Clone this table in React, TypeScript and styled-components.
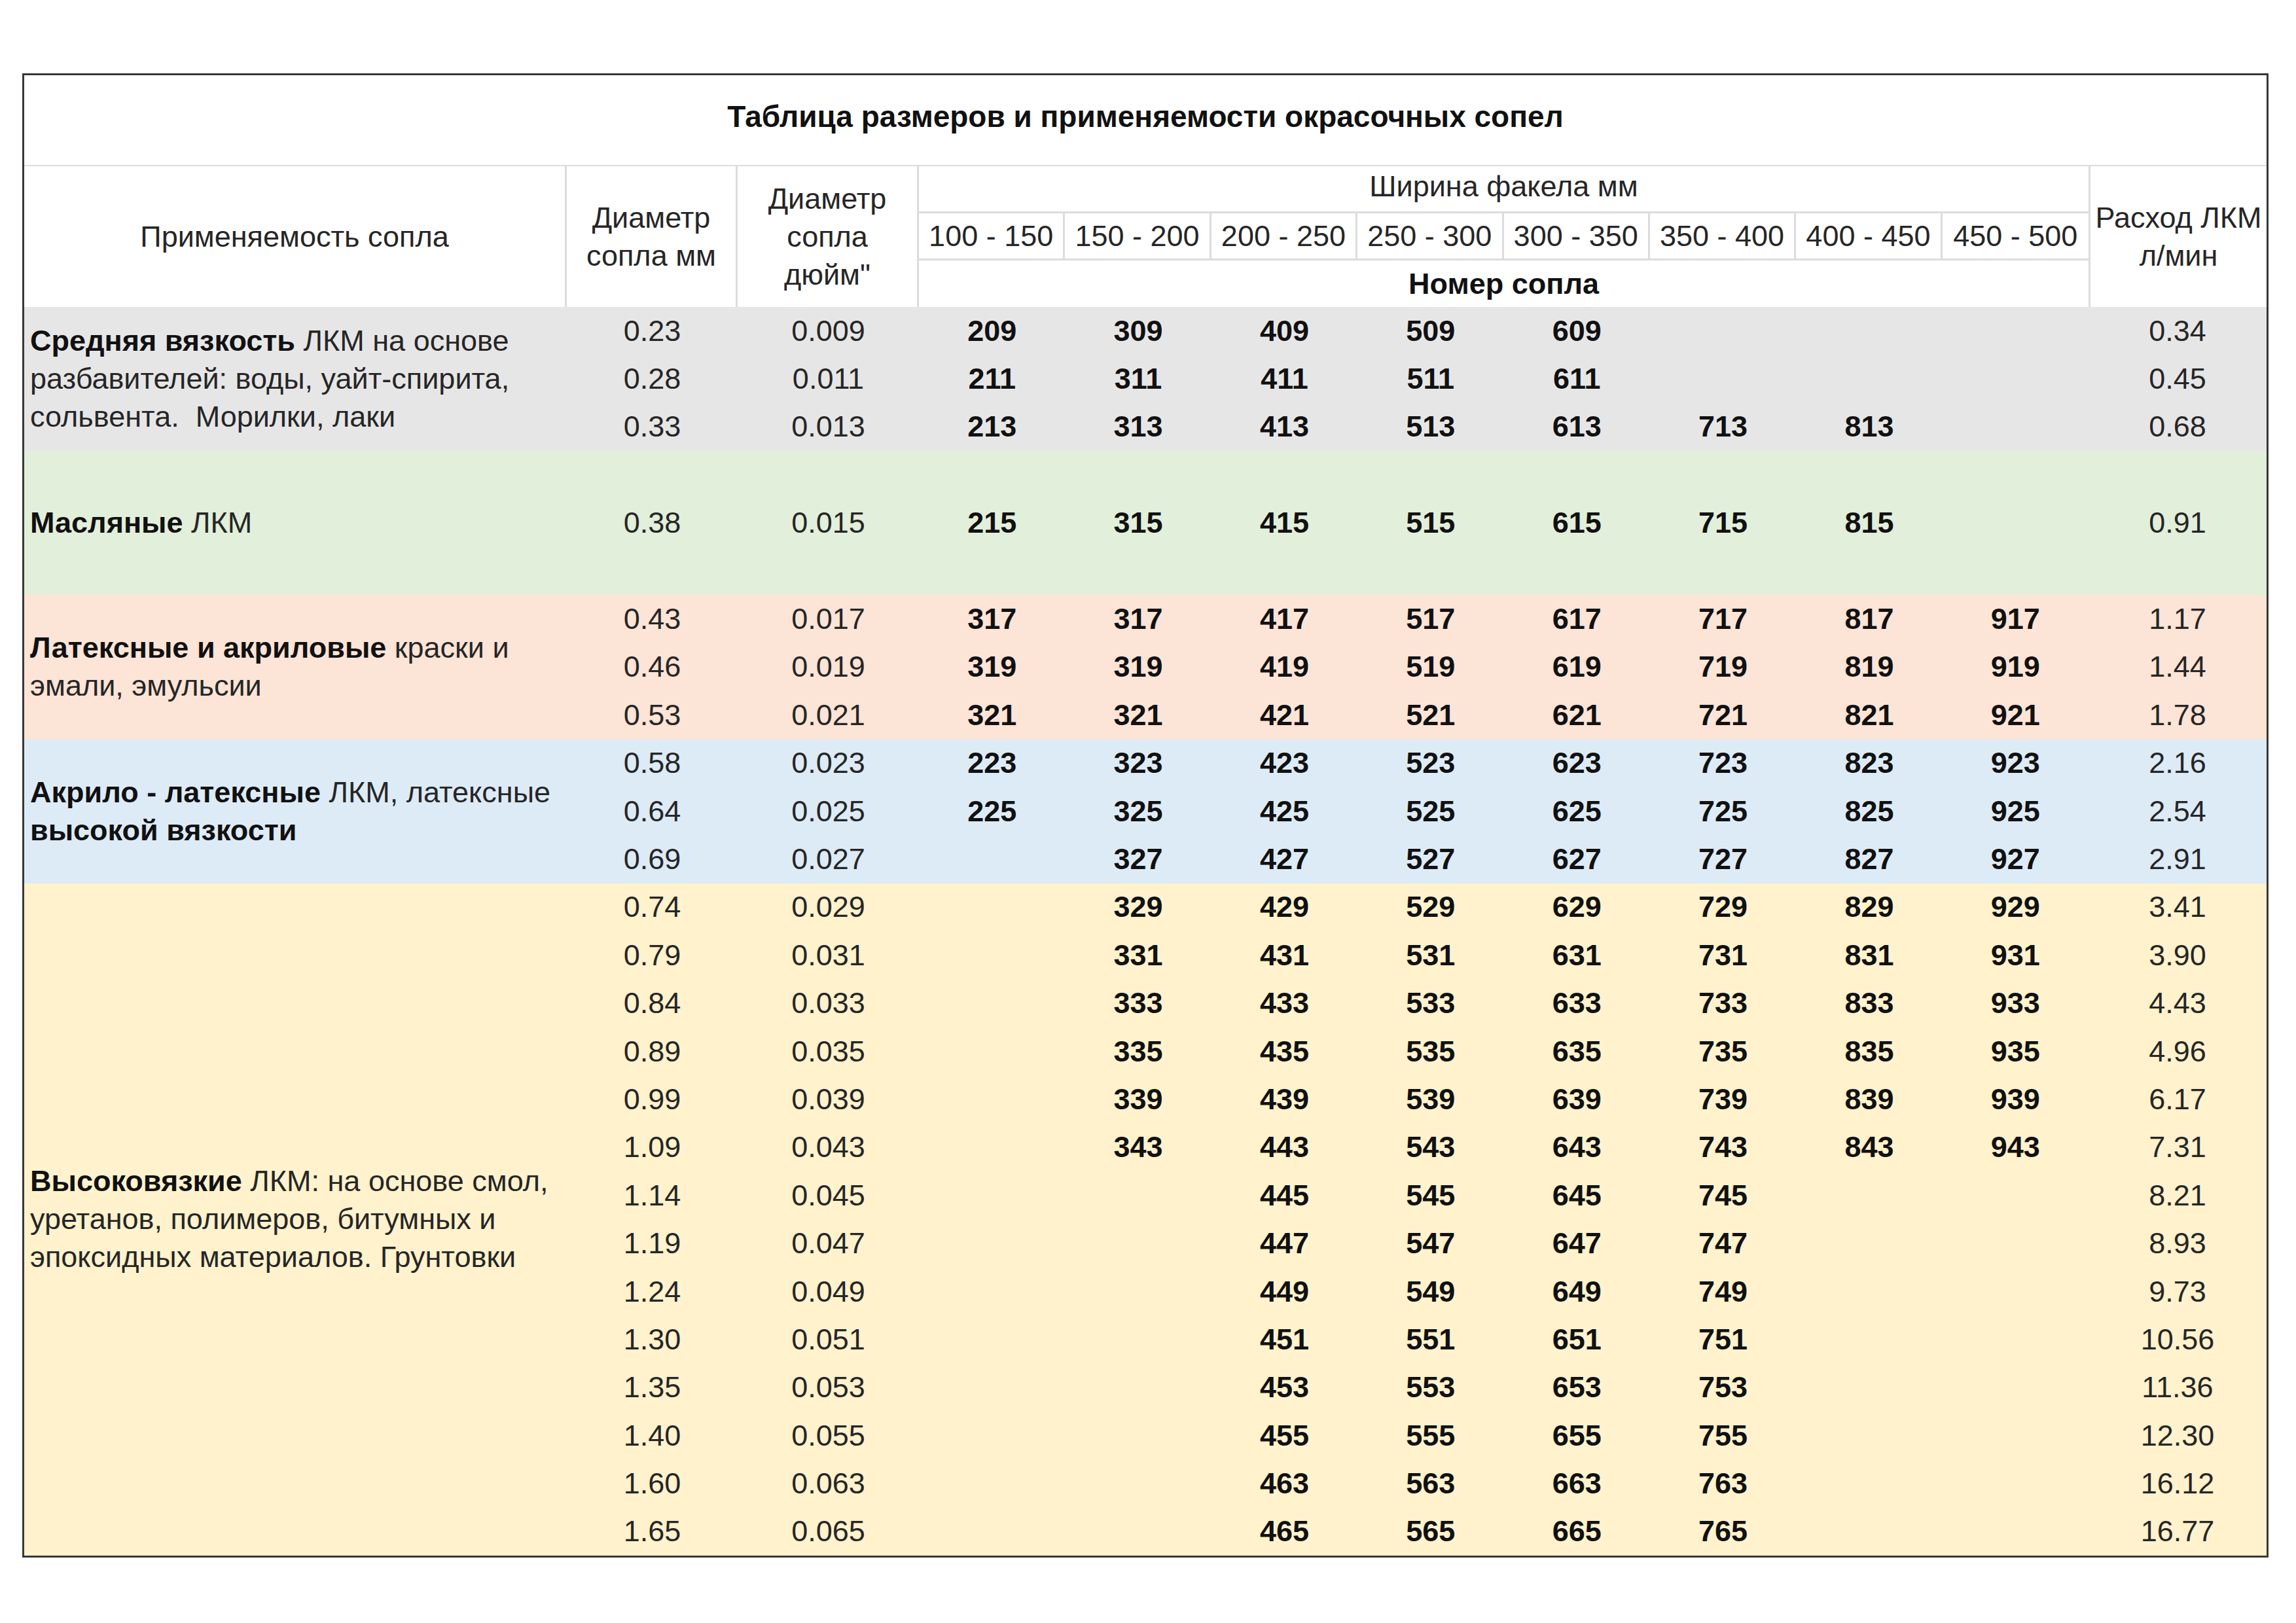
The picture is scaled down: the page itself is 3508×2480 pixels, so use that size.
import React from "react";
import styled, { createGlobalStyle } from "styled-components";

const COLS = "829px 261px 277px repeat(8, 223.375px) 272px";
const UNIT = 73.4;
const LINE = "#dcdcdc";

const GlobalStyle = createGlobalStyle`
  html, body { margin: 0; padding: 0; background: #ffffff; }
  body { font-family: "Liberation Sans", Arial, sans-serif; color: #222222; }
`;

const Page = styled.div`
  width: 3508px;
  height: 2480px;
  box-sizing: border-box;
  padding: 112px 0 0 34px;
  background: #ffffff;
`;

const Table = styled.div`
  width: 3432px;
  box-sizing: border-box;
  border: 3px solid #383838;
  display: flex;
  flex-direction: column;
`;

const Title = styled.div`
  height: 139px;
  box-sizing: border-box;
  border-bottom: 2px solid ${LINE};
  padding-bottom: 12px;
  display: flex;
  align-items: center;
  justify-content: center;
  font-size: 46px;
  font-weight: 700;
  color: #111111;
`;

const HeaderGrid = styled.div`
  display: grid;
  grid-template-columns: ${COLS};
  grid-template-rows: 72px 72px 71px;
  background: #ffffff;
`;

const HeadCell = styled.div<{
  $col: string;
  $row: string;
  $bold?: boolean;
  $right?: boolean;
  $left?: boolean;
  $bottom?: boolean;
  $pad?: number;
}>`
  grid-column: ${(p) => p.$col};
  grid-row: ${(p) => p.$row};
  box-sizing: border-box;
  display: flex;
  flex-direction: column;
  align-items: center;
  justify-content: center;
  text-align: center;
  font-size: 45px;
  line-height: 58px;
  white-space: nowrap;
  font-weight: ${(p) => (p.$bold ? 700 : 400)};
  color: ${(p) => (p.$bold ? "#111111" : "#262626")};
  border-right: ${(p) => (p.$right ? `3px solid ${LINE}` : "none")};
  border-left: ${(p) => (p.$left ? `3px solid ${LINE}` : "none")};
  border-bottom: ${(p) => (p.$bottom ? `3px solid ${LINE}` : "none")};
  padding-bottom: ${(p) => p.$pad ?? 0}px;
`;

const HeadLine = styled.div`
  line-height: 58px;
`;

const Group = styled.div<{ $bg: string; $rowH: number }>`
  display: grid;
  grid-template-columns: ${COLS};
  grid-auto-rows: ${(p) => p.$rowH}px;
  background: ${(p) => p.$bg};
`;

const Label = styled.div<{ $rows: number }>`
  grid-column: 1;
  grid-row: 1 / span ${(p) => p.$rows};
  display: flex;
  flex-direction: column;
  justify-content: center;
  padding-left: 9px;
  font-size: 45px;
  line-height: 58px;
  color: #262626;
`;

const LabelLine = styled.div`
  white-space: pre;
  line-height: 58px;
`;

const Strong = styled.b`
  font-weight: 700;
  color: #111111;
`;

const Cell = styled.div<{ $bold?: boolean }>`
  display: flex;
  align-items: center;
  justify-content: center;
  font-size: 45px;
  font-weight: ${(p) => (p.$bold ? 700 : 400)};
  color: ${(p) => (p.$bold ? "#111111" : "#262626")};
`;

type Row = [string, string, (string | null)[], string];

// a label line: list of [text, bold]
type Part = [string, boolean];

interface GroupDef {
  bg: string;
  rowH: number;
  label: Part[][];
  rows: Row[];
}

const r = (mm: string, inch: string, nums: string, flow: string): Row => [
  mm,
  inch,
  nums.split(" ").map((n) => (n === "-" ? null : n)),
  flow,
];

const groups: GroupDef[] = [
  {
    bg: "#e7e6e7",
    rowH: UNIT,
    label: [
      [
        ["Средняя вязкость", true],
        [" ЛКМ на основе", false],
      ],
      [["разбавителей: воды, уайт-спирита,", false]],
      [["сольвента.  Морилки, лаки", false]],
    ],
    rows: [
      r("0.23", "0.009", "209 309 409 509 609 - - -", "0.34"),
      r("0.28", "0.011", "211 311 411 511 611 - - -", "0.45"),
      r("0.33", "0.013", "213 313 413 513 613 713 813 -", "0.68"),
    ],
  },
  {
    bg: "#e2efda",
    rowH: UNIT * 3,
    label: [
      [
        ["Масляные", true],
        [" ЛКМ", false],
      ],
    ],
    rows: [r("0.38", "0.015", "215 315 415 515 615 715 815 -", "0.91")],
  },
  {
    bg: "#fce4d6",
    rowH: UNIT,
    label: [
      [
        ["Латексные и акриловые", true],
        [" краски и", false],
      ],
      [["эмали, эмульсии", false]],
    ],
    rows: [
      r("0.43", "0.017", "317 317 417 517 617 717 817 917", "1.17"),
      r("0.46", "0.019", "319 319 419 519 619 719 819 919", "1.44"),
      r("0.53", "0.021", "321 321 421 521 621 721 821 921", "1.78"),
    ],
  },
  {
    bg: "#ddebf7",
    rowH: UNIT,
    label: [
      [
        ["Акрило - латексные", true],
        [" ЛКМ, латексные", false],
      ],
      [["высокой вязкости", true]],
    ],
    rows: [
      r("0.58", "0.023", "223 323 423 523 623 723 823 923", "2.16"),
      r("0.64", "0.025", "225 325 425 525 625 725 825 925", "2.54"),
      r("0.69", "0.027", "- 327 427 527 627 727 827 927", "2.91"),
    ],
  },
  {
    bg: "#fff2cc",
    rowH: UNIT,
    label: [
      [
        ["Высоковязкие", true],
        [" ЛКМ: на основе смол,", false],
      ],
      [["уретанов, полимеров, битумных и", false]],
      [["эпоксидных материалов. Грунтовки", false]],
    ],
    rows: [
      r("0.74", "0.029", "- 329 429 529 629 729 829 929", "3.41"),
      r("0.79", "0.031", "- 331 431 531 631 731 831 931", "3.90"),
      r("0.84", "0.033", "- 333 433 533 633 733 833 933", "4.43"),
      r("0.89", "0.035", "- 335 435 535 635 735 835 935", "4.96"),
      r("0.99", "0.039", "- 339 439 539 639 739 839 939", "6.17"),
      r("1.09", "0.043", "- 343 443 543 643 743 843 943", "7.31"),
      r("1.14", "0.045", "- - 445 545 645 745 - -", "8.21"),
      r("1.19", "0.047", "- - 447 547 647 747 - -", "8.93"),
      r("1.24", "0.049", "- - 449 549 649 749 - -", "9.73"),
      r("1.30", "0.051", "- - 451 551 651 751 - -", "10.56"),
      r("1.35", "0.053", "- - 453 553 653 753 - -", "11.36"),
      r("1.40", "0.055", "- - 455 555 655 755 - -", "12.30"),
      r("1.60", "0.063", "- - 463 563 663 763 - -", "16.12"),
      r("1.65", "0.065", "- - 465 565 665 765 - -", "16.77"),
    ],
  },
];

const ranges = [
  "100 - 150",
  "150 - 200",
  "200 - 250",
  "250 - 300",
  "300 - 350",
  "350 - 400",
  "400 - 450",
  "450 - 500",
];

export default function App() {
  return (
    <>
      <GlobalStyle />
      <Page>
        <Table>
          <Title>Таблица размеров и применяемости окрасочных сопел</Title>
          <HeaderGrid>
            <HeadCell $col="1" $row="1 / 4" $right>
              Применяемость сопла
            </HeadCell>
            <HeadCell $col="2" $row="1 / 4" $right>
              <HeadLine>Диаметр</HeadLine>
              <HeadLine>сопла мм</HeadLine>
            </HeadCell>
            <HeadCell $col="3" $row="1 / 4" $right>
              <HeadLine>Диаметр</HeadLine>
              <HeadLine>сопла</HeadLine>
              <HeadLine>дюйм"</HeadLine>
            </HeadCell>
            <HeadCell $col="4 / 12" $row="1" $bottom $pad={8}>
              Ширина факела мм
            </HeadCell>
            {ranges.map((rg, i) => (
              <HeadCell key={rg} $col={String(4 + i)} $row="2" $bottom $right={i < 7}>
                {rg}
              </HeadCell>
            ))}
            <HeadCell $col="4 / 12" $row="3" $bold>
              Номер сопла
            </HeadCell>
            <HeadCell $col="12" $row="1 / 4" $left>
              <HeadLine>Расход ЛКМ</HeadLine>
              <HeadLine>л/мин</HeadLine>
            </HeadCell>
          </HeaderGrid>
          {groups.map((g, gi) => (
            <Group key={gi} $bg={g.bg} $rowH={g.rowH}>
              <Label $rows={g.rows.length}>
                {g.label.map((line, li) => (
                  <LabelLine key={li}>
                    {line.map(([t, b], pi) =>
                      b ? <Strong key={pi}>{t}</Strong> : <span key={pi}>{t}</span>
                    )}
                  </LabelLine>
                ))}
              </Label>
              {g.rows.map((row, ri) => (
                <React.Fragment key={ri}>
                  <Cell>{row[0]}</Cell>
                  <Cell>{row[1]}</Cell>
                  {row[2].map((n, ni) => (
                    <Cell key={ni} $bold>
                      {n ?? ""}
                    </Cell>
                  ))}
                  <Cell>{row[3]}</Cell>
                </React.Fragment>
              ))}
            </Group>
          ))}
        </Table>
      </Page>
    </>
  );
}
